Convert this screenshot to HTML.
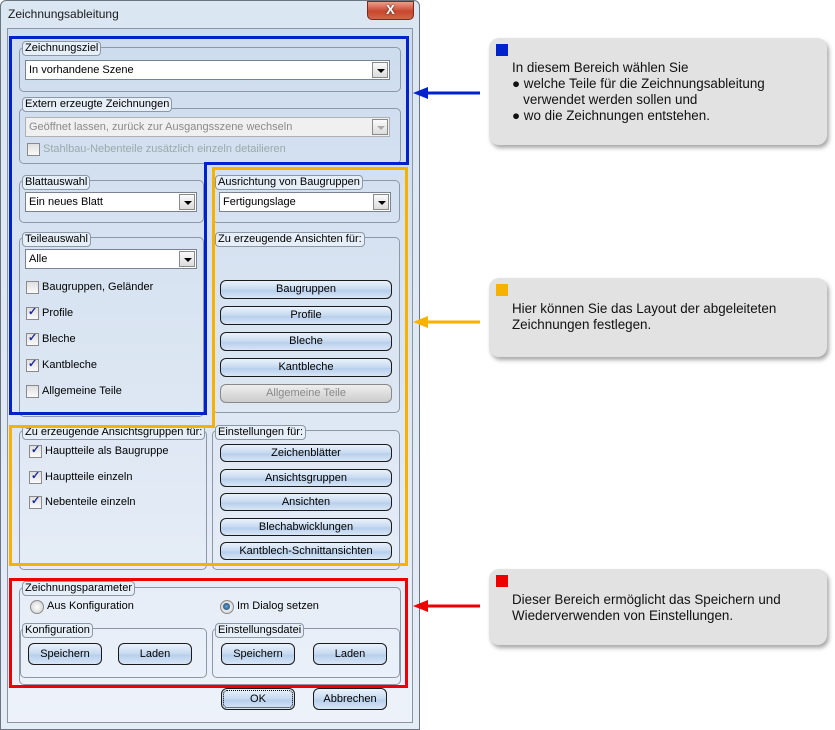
<!DOCTYPE html>
<html><head><meta charset="utf-8"><style>
*{box-sizing:border-box;margin:0;padding:0}
body{width:835px;height:730px;background:#fff;position:relative;overflow:hidden;font-family:"Liberation Sans",Tahoma,sans-serif;font-size:11px;color:#000}
.a{position:absolute}
.win{left:0;top:0;width:420px;height:730px;background:linear-gradient(#dbe6f3,#e4ecf6);border:1px solid #6b7480;border-radius:6px 6px 0 0}
.client{left:7px;top:28px;width:406px;height:695px;border:1px solid #8a96a4;background:linear-gradient(#cddcee,#dfe8f4 60%,#edf2fa)}
.title{left:8px;top:7px;font-size:12px;color:#1a1a1a}
.close{left:367px;top:1px;width:47px;height:19px;border-radius:0 0 5px 5px;background:linear-gradient(#e8a08c,#c8462c 55%,#d0664c);border:1px solid #7a2a1a;color:#fff;font-weight:bold;font-size:13px;text-align:center;line-height:16px;text-shadow:0 0 2px #333}
.g{position:absolute;border:1px solid #8c98a6;border-radius:5px}
.lb{position:absolute;background:#e6eef8;border:1px solid #8c98a6;border-radius:4px;padding:0 2px;line-height:13px;white-space:nowrap}
.sel{position:absolute;height:20px;background:#fff;border:1px solid #7a8490;padding-left:3px;line-height:18px}
.sel.d{background:#f0f0f0;color:#8a8a8a;border-color:#b0b0b0}
.sel i{position:absolute;right:1px;top:1px;width:16px;height:16px;border:1px solid #8a8a8a;background:linear-gradient(#fafafa,#dcdcdc)}
.sel i:after{content:"";position:absolute;left:4px;top:6px;border-left:4px solid transparent;border-right:4px solid transparent;border-top:4px solid #000}
.sel.d i:after{border-top-color:#aaa}
.cb{position:absolute;white-space:nowrap;line-height:13px;padding-left:16px}
.cb:before{content:"";position:absolute;left:0;top:0;width:11px;height:11px;border:1px solid #8a8a8a;background:linear-gradient(#e0e0e0,#fafafa)}
.cb.k:after{content:"✓";position:absolute;left:2px;top:-1px;color:#1a2a9a;font-weight:bold;font-size:11px}
.cb.d{color:#9aa}
.btn{position:absolute;border:1px solid #1a1a1a;border-radius:6px;background:linear-gradient(#eaf2fc,#c6d9ef 50%,#b7cfec 55%,#d8e6f6);text-align:center;line-height:16px}
.btn.d{color:#888;border-color:#888;background:linear-gradient(#eee,#ccc)}
.rd{position:absolute;padding-left:17px;line-height:13px;white-space:nowrap}
.rd:before{content:"";position:absolute;left:0;top:0;width:12px;height:12px;border-radius:50%;border:1px solid #8a8a8a;background:radial-gradient(#fff,#ccc)}
.rd.on:after{content:"";position:absolute;left:3px;top:3px;width:7px;height:7px;border-radius:50%;background:radial-gradient(#6ad,#135)}
.co{position:absolute;left:489px;width:338px;background:#e2e2e2;border-radius:10px;box-shadow:2px 3px 4px rgba(0,0,0,.35);font-size:13.4px;line-height:16px;color:#111}
.sq{position:absolute;left:7px;top:6px;width:12px;height:12px}
.co p{position:absolute;left:23px;white-space:nowrap}
</style></head><body>
<div class="a win"></div>
<div class="a title">Zeichnungsableitung</div>
<div class="a close">X</div>
<div class="a client"></div>

<div class="g" style="left:19px;top:47px;width:382px;height:45px"></div>
<div class="lb" style="left:22px;top:41px">Zeichnungsziel</div>
<div class="sel" style="left:25px;top:60px;width:365px">In vorhandene Szene<i></i></div>

<div class="g" style="left:19px;top:108px;width:382px;height:56px"></div>
<div class="lb" style="left:22px;top:97px">Extern erzeugte Zeichnungen</div>
<div class="sel d" style="left:25px;top:117px;width:365px">Geöffnet lassen, zurück zur Ausgangsszene wechseln<i></i></div>
<div class="cb d" style="left:27px;top:143px">Stahlbau-Nebenteile zusätzlich einzeln detailieren</div>

<div class="g" style="left:19px;top:180px;width:185px;height:43px"></div>
<div class="lb" style="left:22px;top:175px">Blattauswahl</div>
<div class="sel" style="left:25px;top:192px;width:172px">Ein neues Blatt<i></i></div>

<div class="g" style="left:19px;top:237px;width:185px;height:180px"></div>
<div class="lb" style="left:22px;top:232px">Teileauswahl</div>
<div class="sel" style="left:25px;top:249px;width:172px">Alle<i></i></div>
<div class="cb" style="left:26px;top:281px">Baugruppen, Geländer</div>
<div class="cb k" style="left:26px;top:307px">Profile</div>
<div class="cb k" style="left:26px;top:333px">Bleche</div>
<div class="cb k" style="left:26px;top:359px">Kantbleche</div>
<div class="cb" style="left:26px;top:385px">Allgemeine Teile</div>

<div class="g" style="left:212px;top:180px;width:188px;height:43px"></div>
<div class="lb" style="left:215px;top:175px">Ausrichtung von Baugruppen</div>
<div class="sel" style="left:219px;top:192px;width:172px">Fertigungslage<i></i></div>

<div class="g" style="left:212px;top:237px;width:188px;height:176px"></div>
<div class="lb" style="left:215px;top:232px">Zu erzeugende Ansichten für:</div>
<div class="btn" style="left:220px;top:280px;width:172px;height:19px">Baugruppen</div>
<div class="btn" style="left:220px;top:306px;width:172px;height:19px">Profile</div>
<div class="btn" style="left:220px;top:332px;width:172px;height:19px">Bleche</div>
<div class="btn" style="left:220px;top:358px;width:172px;height:19px">Kantbleche</div>
<div class="btn d" style="left:220px;top:384px;width:172px;height:19px">Allgemeine Teile</div>

<div class="g" style="left:19px;top:430px;width:188px;height:140px"></div>
<div class="lb" style="left:22px;top:425px">Zu erzeugende Ansichtsgruppen für:</div>
<div class="cb k" style="left:29px;top:445px">Hauptteile als Baugruppe</div>
<div class="cb k" style="left:29px;top:471px">Hauptteile einzeln</div>
<div class="cb k" style="left:29px;top:496px">Nebenteile einzeln</div>

<div class="g" style="left:212px;top:430px;width:188px;height:140px"></div>
<div class="lb" style="left:215px;top:425px">Einstellungen für:</div>
<div class="btn" style="left:220px;top:444px;width:172px;height:18px">Zeichenblätter</div>
<div class="btn" style="left:220px;top:469px;width:172px;height:18px">Ansichtsgruppen</div>
<div class="btn" style="left:220px;top:493px;width:172px;height:18px">Ansichten</div>
<div class="btn" style="left:220px;top:518px;width:172px;height:18px">Blechabwicklungen</div>
<div class="btn" style="left:220px;top:542px;width:172px;height:18px">Kantblech-Schnittansichten</div>

<div class="g" style="left:19px;top:587px;width:382px;height:98px"></div>
<div class="lb" style="left:22px;top:581px">Zeichnungsparameter</div>
<div class="rd" style="left:30px;top:600px">Aus Konfiguration</div>
<div class="rd on" style="left:220px;top:600px">Im Dialog setzen</div>
<div class="g" style="left:20px;top:628px;width:187px;height:50px"></div>
<div class="lb" style="left:22px;top:623px">Konfiguration</div>
<div class="btn" style="left:28px;top:643px;width:74px;height:22px;line-height:20px">Speichern</div>
<div class="btn" style="left:118px;top:643px;width:74px;height:22px;line-height:20px">Laden</div>
<div class="g" style="left:212px;top:628px;width:188px;height:50px"></div>
<div class="lb" style="left:215px;top:623px">Einstellungsdatei</div>
<div class="btn" style="left:221px;top:643px;width:74px;height:22px;line-height:20px">Speichern</div>
<div class="btn" style="left:313px;top:643px;width:74px;height:22px;line-height:20px">Laden</div>

<div class="btn" style="left:221px;top:688px;width:74px;height:22px;line-height:20px;outline:1px dotted #000;outline-offset:-3px">OK</div>
<div class="btn" style="left:313px;top:688px;width:74px;height:22px;line-height:20px">Abbrechen</div>

<svg class="a" style="left:0;top:0" width="835" height="730">
<polygon points="10.5,37.5 407.5,37.5 407.5,163.5 205.5,163.5 205.5,413.5 10.5,413.5" fill="none" stroke="#0022cc" stroke-width="3"/>
<polygon points="213.5,168.5 406.5,168.5 406.5,564.5 10.5,564.5 10.5,426.5 213.5,426.5" fill="none" stroke="#f7b200" stroke-width="3"/>
<rect x="10.5" y="579.5" width="396" height="107" fill="none" stroke="#ee0000" stroke-width="3"/>
<line x1="480" y1="93" x2="425" y2="93" stroke="#0022cc" stroke-width="3"/>
<polygon points="413,93 428,87 428,99" fill="#0022cc"/>
<line x1="480" y1="322" x2="425" y2="322" stroke="#f7b200" stroke-width="3"/>
<polygon points="413,322 428,316 428,328" fill="#f7b200"/>
<line x1="480" y1="606" x2="425" y2="606" stroke="#ee0000" stroke-width="3"/>
<polygon points="413,606 428,600 428,612" fill="#ee0000"/>
</svg>

<div class="co" style="top:38px;height:107px"><div class="sq" style="background:#0022cc"></div>
<p style="top:22px">In diesem Bereich wählen Sie</p>
<p style="top:38px">● welche Teile für die Zeichnungsableitung</p>
<p style="top:54px">&nbsp;&nbsp;&nbsp;verwendet werden sollen und</p>
<p style="top:70px">● wo die Zeichnungen entstehen.</p></div>
<div class="co" style="top:278px;height:79px"><div class="sq" style="background:#f7b200"></div>
<p style="top:23px">Hier können Sie das Layout der abgeleiteten</p>
<p style="top:39px">Zeichnungen festlegen.</p></div>
<div class="co" style="top:569px;height:76px"><div class="sq" style="background:#ee0000"></div>
<p style="top:23px">Dieser Bereich ermöglicht das Speichern und</p>
<p style="top:39px">Wiederverwenden von Einstellungen.</p></div>
</body></html>
